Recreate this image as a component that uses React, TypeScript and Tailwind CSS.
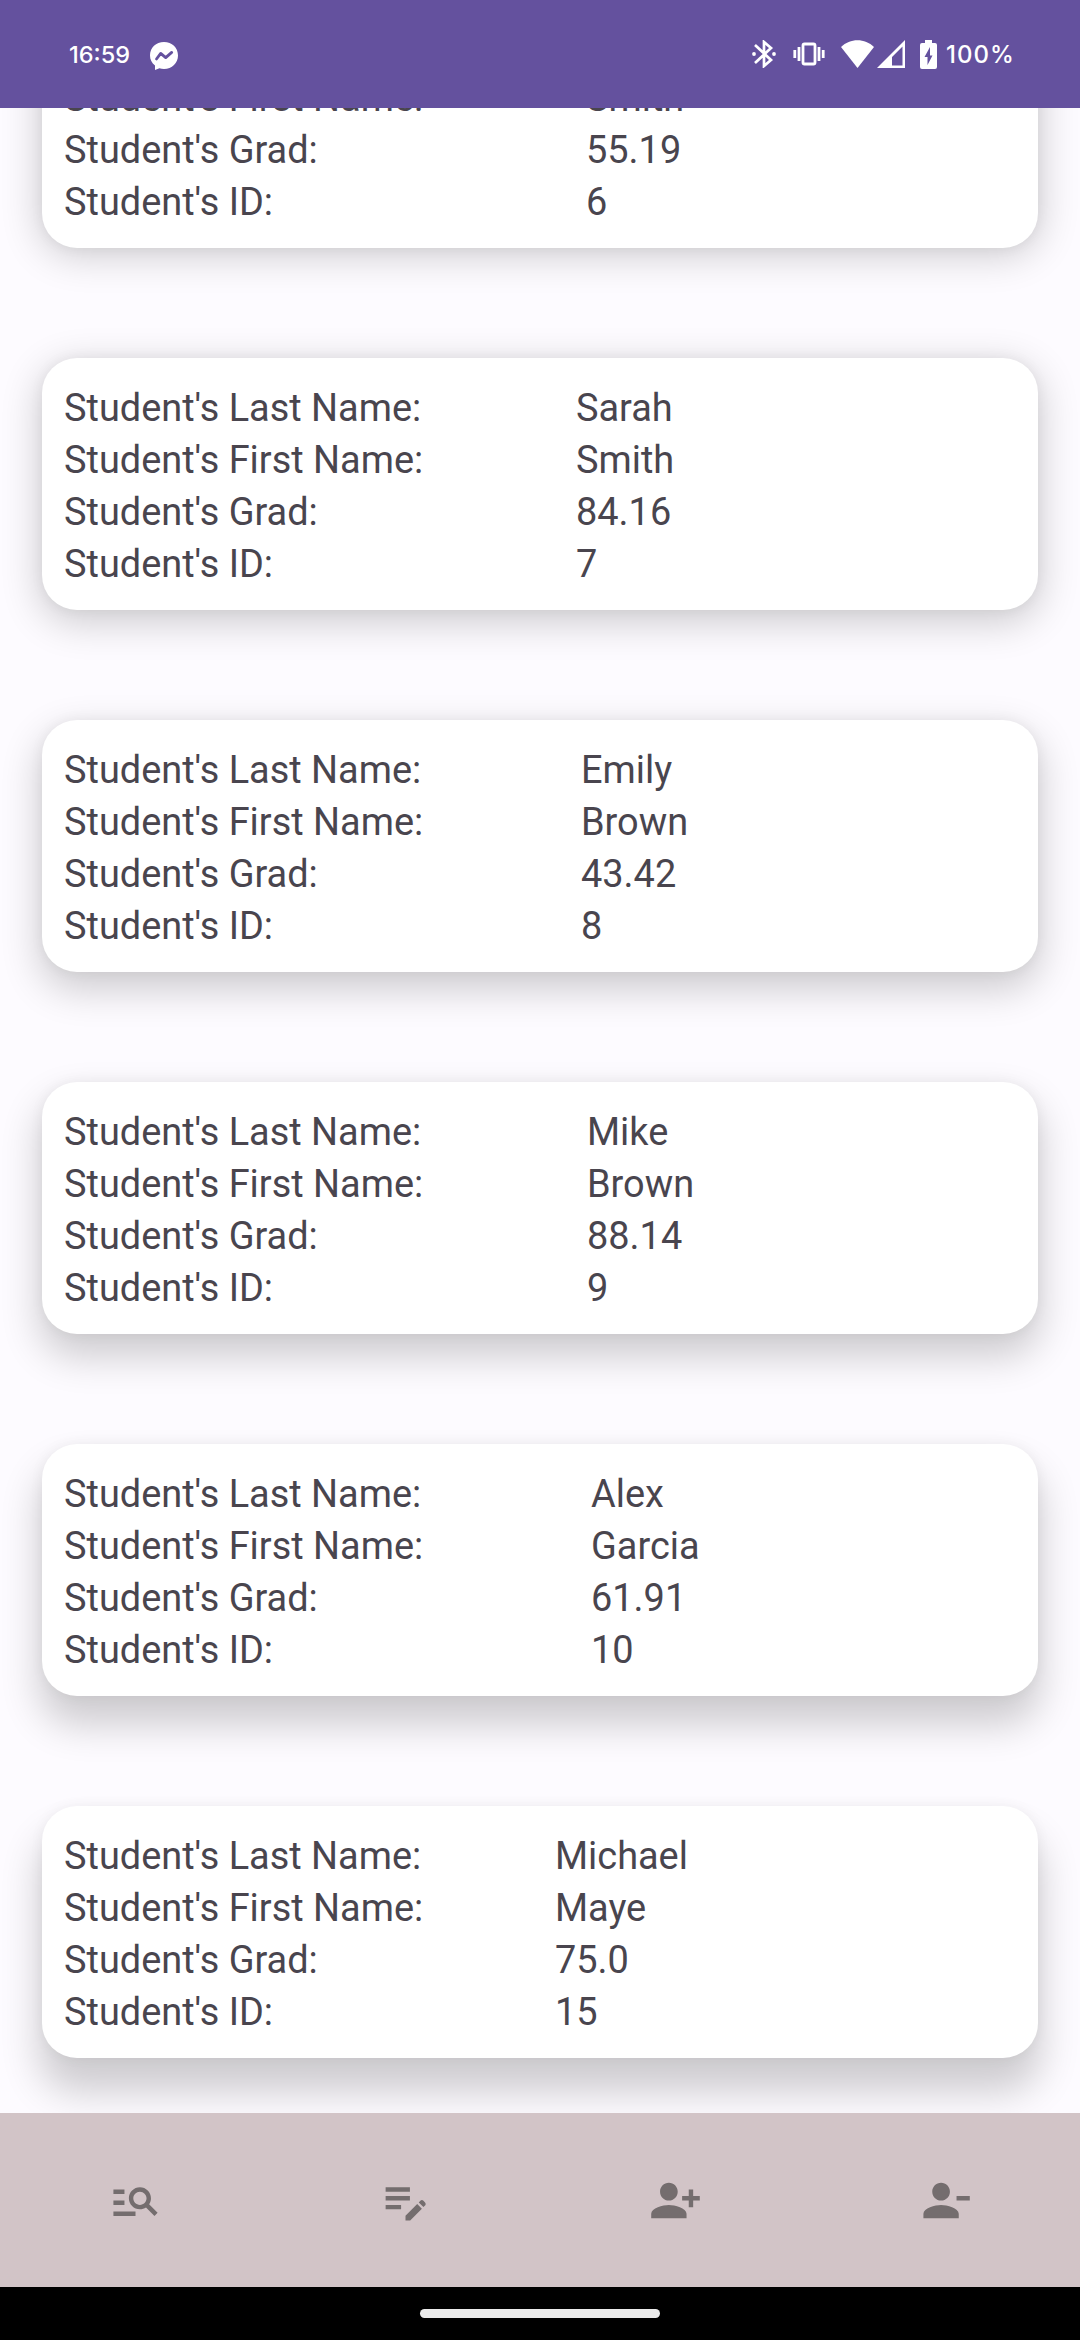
import React from "react";
import { MdManageSearch, MdEditNote, MdPersonAddAlt1, MdPersonRemove } from "react-icons/md";

type Student = { last?: string; first: string; grad: string; id: string; column: string; shadow: string };

const students: Student[] = [
  { first: "Smith", grad: "55.19", id: "6", column: "w-[522px]", shadow: "shadow-[0_5px_38px_3px_rgba(0,0,0,0.19),0_0_14px_rgba(0,0,0,0.05)]" },
  { last: "Sarah", first: "Smith", grad: "84.16", id: "7", column: "w-[512px]", shadow: "shadow-[0_10px_38px_3px_rgba(0,0,0,0.19),0_0_14px_rgba(0,0,0,0.05)]" },
  { last: "Emily", first: "Brown", grad: "43.42", id: "8", column: "w-[517px]", shadow: "shadow-[0_15px_38px_3px_rgba(0,0,0,0.19),0_0_14px_rgba(0,0,0,0.05)]" },
  { last: "Mike", first: "Brown", grad: "88.14", id: "9", column: "w-[523px]", shadow: "shadow-[0_20px_38px_3px_rgba(0,0,0,0.19),0_0_14px_rgba(0,0,0,0.05)]" },
  { last: "Alex", first: "Garcia", grad: "61.91", id: "10", column: "w-[527px]", shadow: "shadow-[0_26px_38px_3px_rgba(0,0,0,0.19),0_0_14px_rgba(0,0,0,0.05)]" },
  { last: "Michael", first: "Maye", grad: "75.0", id: "15", column: "w-[491px]", shadow: "shadow-[0_31px_38px_3px_rgba(0,0,0,0.19),0_0_14px_rgba(0,0,0,0.05)]" },
];

function Row({ label, value, column }: { label: string; value: string; column: string }) {
  return (
    <div className="flex h-[52px] leading-[52px]">
      <span className={`shrink-0 ${column}`}>{label}</span>
      <span>{value}</span>
    </div>
  );
}

function StudentCard({ s }: { s: Student }) {
  return (
    <article className={`flex h-[252px] shrink-0 flex-col justify-end rounded-[35px] bg-white px-[22px] pb-5 text-[37.9px] text-[#49454e] ${s.shadow}`}>
      {s.last && <Row label="Student's Last Name:" value={s.last} column={s.column} />}
      <Row label="Student's First Name:" value={s.first} column={s.column} />
      <Row label="Student's Grad:" value={s.grad} column={s.column} />
      <Row label="Student's ID:" value={s.id} column={s.column} />
    </article>
  );
}

function StatusBar() {
  return (
    <header className="z-10 flex h-[108px] shrink-0 items-center bg-[#64519e] px-[67px] font-['Inter',sans-serif] font-medium text-white">
      <span className="mt-[2px] w-[81px] pl-[2px] text-[23.5px]">16:59</span>
      <svg className="mt-[3px] ml-[2px] h-7 w-7" viewBox="0 0 28 28" fill="none">
        <path fill="#fff" d="M14 0C6 0 0 5.800 0 13.400c0 4 1.800 7.500 5 10V28l4.400-1.700c1.400.4 3 .6 4.600.6 8 0 14-5.900 14-13.500S22 0 14 0Z" />
        <path d="m6.500 17 4.200-5.600 5 4.200 6-5.200" stroke="#64519e" strokeWidth="2.800" strokeLinejoin="round" strokeLinecap="round" />
      </svg>
      <div className="ml-auto flex items-center">
        <svg className="mr-[17px] h-7 w-6" viewBox="0 0 24 28" fill="none" stroke="#fff" strokeWidth="2.700">
          <path d="m3 5 16 15-7 6V2l7 6L3 23" />
          <circle cx="2" cy="14" r="1.900" fill="#fff" stroke="none" />
          <circle cx="22" cy="14" r="1.900" fill="#fff" stroke="none" />
        </svg>
        <svg className="mr-4 h-6 w-8" viewBox="0 0 32 24" fill="none" stroke="#fff" strokeWidth="2.800">
          <rect x="10" y="2" width="12" height="20" rx="1.500" />
          <path d="M6 5v14M26 5v14M1.800 8v8M30.200 8v8" />
        </svg>
        <svg className="mr-[3px] h-7 w-[33px]" viewBox="0 0 33 28" fill="#fff">
          <path d="M0 7C9-2 24-2 33 7L16.500 28Z" />
        </svg>
        <svg className="mr-[15px] h-7 w-7" viewBox="0 0 28 28">
          <path fill="#fff" fillRule="evenodd" d="M28 0v28H0ZM25.500 6.500 15 17v8.500h10.500Z" />
        </svg>
        <svg className="mr-[9px] h-[29px] w-[17px]" viewBox="0 0 17 29">
          <path fill="#fff" fillRule="evenodd" d="M5 0h7v3h3q2 0 2 2v22q0 2-2 2H2q-2 0-2-2V5q0-2 2-2h3ZM10 7 4.500 17h3v8l5-9.500H10Z" />
        </svg>
        <span className="mt-[2px] w-[67px] text-[24px] tracking-[1px] whitespace-nowrap">100%</span>
      </div>
    </header>
  );
}

export default function App() {
  const icon = "h-[53px] w-[53px]";
  return (
    <div className="flex h-[2340px] w-[1080px] flex-col overflow-hidden bg-[#fdfbff] font-['Roboto',sans-serif]">
      <StatusBar />
      <main className="flex min-h-0 flex-1 flex-col overflow-hidden px-[42px]">
        <div className="-mt-[112px] flex flex-col gap-[110px]">
          {students.map((s) => (
            <StudentCard key={s.id} s={s} />
          ))}
        </div>
      </main>
      <nav className="z-10 grid h-[174px] shrink-0 grid-cols-4 place-items-center bg-[#d2c4c7] text-[#746d6e]">
        <MdManageSearch className={icon} />
        <MdEditNote className={icon} />
        <MdPersonAddAlt1 className={icon} />
        <MdPersonRemove className={icon} />
      </nav>
      <footer className="flex h-[53px] shrink-0 items-center justify-center bg-black">
        <div className="h-[9px] w-60 rounded-full bg-[#ebebeb]" />
      </footer>
    </div>
  );
}
